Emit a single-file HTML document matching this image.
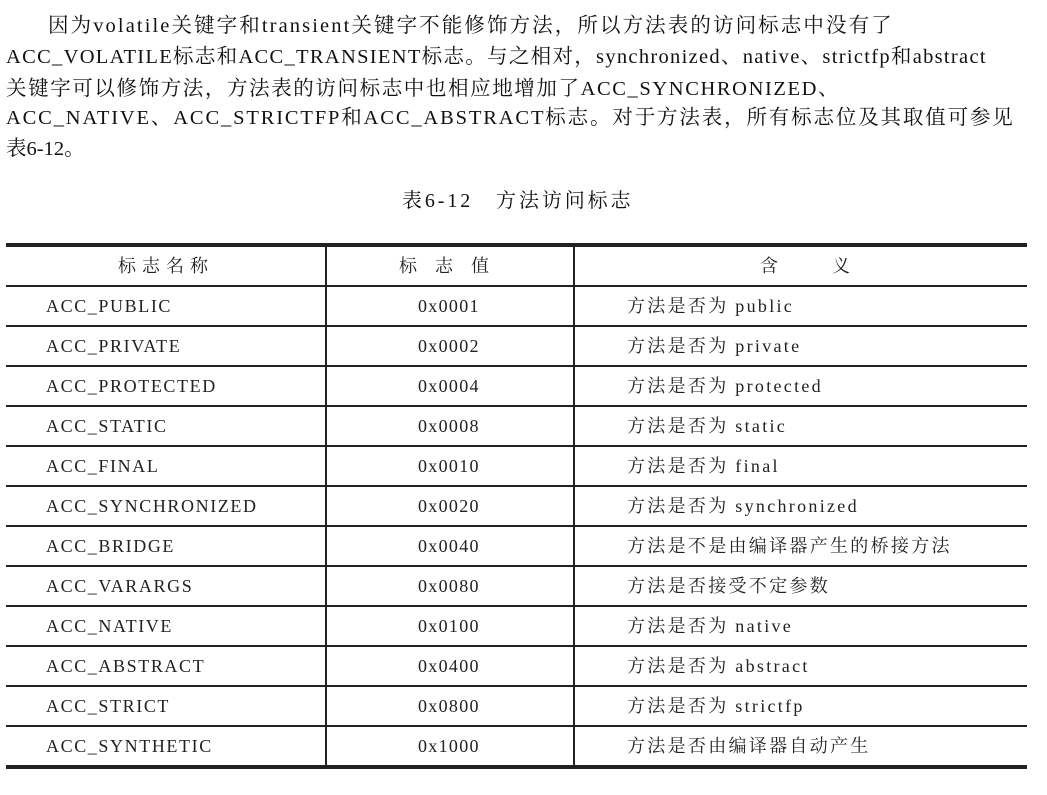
<!DOCTYPE html>
<html><head><meta charset="utf-8"><style>
body{margin:0;background:#fff;width:1047px;height:795px;overflow:hidden;position:relative;font-family:"Liberation Serif","Noto Serif CJK SC",serif;color:#111}
.p{position:absolute;left:6px;font-size:20.5px;white-space:nowrap;line-height:1}
.h{position:absolute;background:#222}
.t{position:absolute;font-size:18px;white-space:nowrap;color:#222;line-height:1;letter-spacing:1.6px}
</style></head><body>
<div class="p" style="top:16px;left:48px;letter-spacing:2.1px">因为volatile关键字和transient关键字不能修饰方法，所以方法表的访问标志中没有了</div>
<div class="p" style="top:47px;letter-spacing:1.3px">ACC_VOLATILE标志和ACC_TRANSIENT标志。与之相对，synchronized、native、strictfp和abstract</div>
<div class="p" style="top:79px;letter-spacing:1.6px">关键字可以修饰方法，方法表的访问标志中也相应地增加了ACC_SYNCHRONIZED、</div>
<div class="p" style="top:108px;letter-spacing:1.85px">ACC_NATIVE、ACC_STRICTFP和ACC_ABSTRACT标志。对于方法表，所有标志位及其取值可参见</div>
<div class="p" style="top:139px">表6-12。</div>
<div class="p" style="top:191px;left:402px;font-size:20px;letter-spacing:2.9px">表6-12　方法访问标志</div>

<div class="h" style="left:6px;width:1021px;top:243px;height:4px"></div>
<div class="h" style="left:6px;width:1021px;top:765px;height:4px"></div>
<div class="h" style="left:325px;width:2px;top:247px;height:518px"></div>
<div class="h" style="left:573px;width:2px;top:247px;height:518px"></div>
<div class="t" style="top:257px;left:118px;letter-spacing:6px">标志名称</div>
<div class="t" style="top:257px;left:399px;letter-spacing:18px">标志值</div>
<div class="t" style="top:257px;left:760px;letter-spacing:54px">含义</div>
<div id="rows"></div>
<script>
var names=["ACC_PUBLIC","ACC_PRIVATE","ACC_PROTECTED","ACC_STATIC","ACC_FINAL","ACC_SYNCHRONIZED","ACC_BRIDGE","ACC_VARARGS","ACC_NATIVE","ACC_ABSTRACT","ACC_STRICT","ACC_SYNTHETIC"];
var vals=["0x0001","0x0002","0x0004","0x0008","0x0010","0x0020","0x0040","0x0080","0x0100","0x0400","0x0800","0x1000"];
var m=["方法是否为 public","方法是否为 private","方法是否为 protected","方法是否为 static","方法是否为 final","方法是否为 synchronized","方法是不是由编译器产生的桥接方法","方法是否接受不定参数","方法是否为 native","方法是否为 abstract","方法是否为 strictfp","方法是否由编译器自动产生"];
var h="";
for(var i=0;i<12;i++){var y=285+i*40;
h+='<div class="h" style="left:6px;width:1021px;top:'+y+'px;height:2px"></div>';
var ty=y+12;
h+='<div class="t" style="top:'+ty+'px;left:46px">'+names[i]+'</div>';
h+='<div class="t" style="top:'+ty+'px;left:418px;letter-spacing:1.3px">'+vals[i]+'</div>';
h+='<div class="t" style="top:'+ty+'px;left:627px;letter-spacing:2.3px">'+m[i]+'</div>';}
document.getElementById("rows").innerHTML=h;
</script>
</body></html>
